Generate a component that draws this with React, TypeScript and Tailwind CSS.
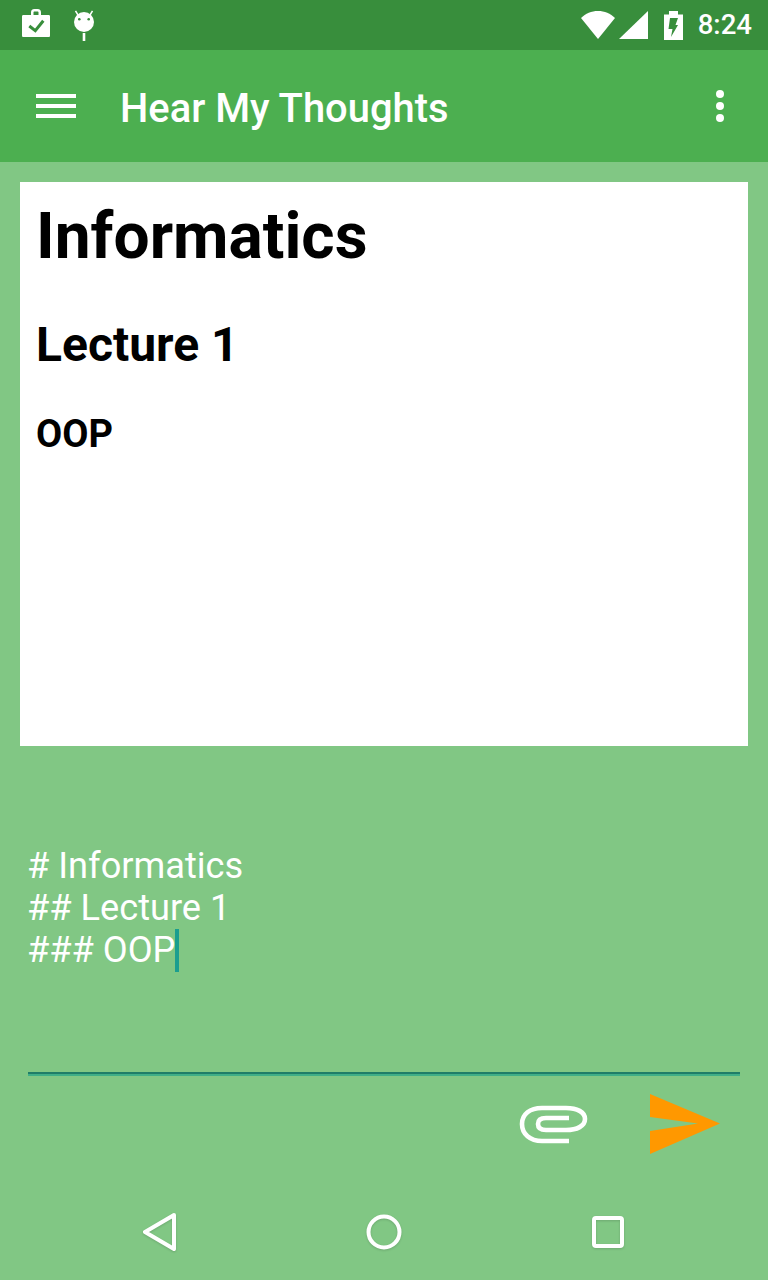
export default function App() {
  return (
    <div className="w-[768px] h-[1280px] flex flex-col bg-[#81c784] overflow-hidden font-['Roboto',sans-serif] text-white">
      <div className="h-[50px] bg-[#388e3c] flex items-center pl-[22px] pr-[16px] shrink-0">
        <svg width="28" height="28" viewBox="0 0 28 28" className="-mt-[4px]">
          <path fillRule="evenodd" fill="#fff" d="M9 6V3.500C9 1.500 10 0 12.500 0h3C18 0 19 1.500 19 3.500V6h7.500C27.500 6 28 6.500 28 7.500v19c0 1-.5 1.500-1.500 1.500h-25C.5 28 0 27.500 0 26.500v-19C0 6.500.5 6 1.500 6zM11.500 6h5V3.500c0-.6-.4-1-1-1h-3c-.6 0-1 .4-1 1z" />
          <path d="M7.300 17l6 4.700 8-10" fill="none" stroke="#388e3c" strokeWidth="3" />
        </svg>
        <svg width="22" height="32" viewBox="0 0 22 32" className="ml-[23px] mt-[2px]">
          <circle cx="11" cy="12" r="10" fill="#fff" />
          <path d="M5 5L2.500 .8M17 5l2.500-4.200" stroke="#fff" strokeWidth="1.500" />
          <circle cx="6.300" cy="9.300" r="1.300" fill="#388e3c" />
          <circle cx="15.700" cy="9.300" r="1.300" fill="#388e3c" />
          <rect x="9.700" y="23" width="2.600" height="8" fill="#fff" />
        </svg>
        <div className="flex-1" />
        <svg width="34" height="28" viewBox="0 0 34 28">
          <path d="M0 7C4.500 2.500 10.500 0 17 0s12.500 2.500 17 7L17 28z" fill="#fff" />
        </svg>
        <svg width="29" height="28" viewBox="0 0 29 28" className="ml-[4px]">
          <path d="M0 28 29 0V28z" fill="#fff" />
        </svg>
        <svg width="19" height="29" viewBox="0 0 19 29" className="ml-[16px]">
          <path d="M0 3.500h5V0h9v3.500h5V29H0z" fill="#fff" />
          <path d="M6 7h8l-2.500 7H14L7 26l1.500-8h-4z" fill="#388e3c" />
        </svg>
        <span className="ml-[15px] text-[27.6px] leading-[32px] font-medium">8:24</span>
      </div>

      <div className="h-[112px] bg-[#4caf50] flex items-center pl-[36px] pr-[44px] shrink-0">
        <div className="w-[40px] flex flex-col gap-[6px]">
          <div className="h-[4px] bg-white" />
          <div className="h-[4px] bg-white" />
          <div className="h-[4px] bg-white" />
        </div>
        <h1 className="ml-[44px] text-[39.9px] leading-[48px] font-medium mt-[5px]">Hear My Thoughts</h1>
        <div className="flex-1" />
        <div className="flex flex-col gap-[4px]">
          <div className="w-[8px] h-[8px] rounded-full bg-white" />
          <div className="w-[8px] h-[8px] rounded-full bg-white" />
          <div className="w-[8px] h-[8px] rounded-full bg-white" />
        </div>
      </div>

      <div className="mx-[20px] mt-[20px] h-[564px] bg-white text-black pl-[16px] shrink-0">
        <div className="text-[64px] leading-[76px] font-bold mt-[17px]">Informatics</div>
        <div className="text-[48px] leading-[56px] font-bold mt-[42px]">Lecture 1</div>
        <div className="text-[38px] leading-[42px] font-bold mt-[40px]">OOP</div>
      </div>

      <div className="mt-[99px] pl-[27px] text-[36.2px] leading-[42px] h-[126px] shrink-0">
        <div>
          # Informatics
        </div>
        <div>## Lecture 1</div>
        <div className="flex items-center h-[42px]">
          ### OOP
          <span className="w-[4px] h-[43px] bg-[#1b9e8f] inline-block shrink-0" />
        </div>
      </div>

      <div className="mx-[28px] mt-[101px] h-[4px] border-t-[2px] border-t-[#1f7d68] bg-[#3fae87] shrink-0" />

      <div className="h-[96px] flex items-center justify-end pr-[48px] shrink-0">
        <svg width="70" height="40" viewBox="0 0 70 40" className="mt-[-1px]">
          <path d="M51 37H24C12 37 4 30 4 20C4 10 12 4 24 4H48C59 4 67 8 67 15C67 22 59 26 48 26H28C23 26 20 24 20 20C20 16 23 14 28 14H51" fill="none" stroke="#fff" strokeWidth="4.600" />
        </svg>
        <svg width="70" height="60" viewBox="0 0 70 60" className="ml-[62px]">
          <path d="M0 0L70 29.500 0 60V37L48 29.500 0 23z" fill="#ff9800" />
        </svg>
      </div>

      <div className="flex-1 flex items-start pt-[40px] pl-[142px]">
        <svg width="36" height="40" viewBox="0 0 36 40" className="drop-shadow-[0_1px_1px_rgba(0,0,0,0.15)]">
          <path d="M32 3L3 20l29 17z" fill="none" stroke="#fff" strokeWidth="4" strokeLinejoin="round" />
        </svg>
        <svg width="36" height="36" viewBox="0 0 36 36" className="ml-[188px] mt-[2px] drop-shadow-[0_1px_1px_rgba(0,0,0,0.15)]">
          <circle cx="18" cy="18" r="15.500" fill="none" stroke="#fff" strokeWidth="4" />
        </svg>
        <svg width="34" height="34" viewBox="0 0 34 34" className="ml-[189px] mt-[3px] drop-shadow-[0_1px_1px_rgba(0,0,0,0.15)]">
          <rect x="3" y="3" width="28" height="28" rx="2" fill="none" stroke="#fff" strokeWidth="4" />
        </svg>
      </div>
    </div>
  );
}
